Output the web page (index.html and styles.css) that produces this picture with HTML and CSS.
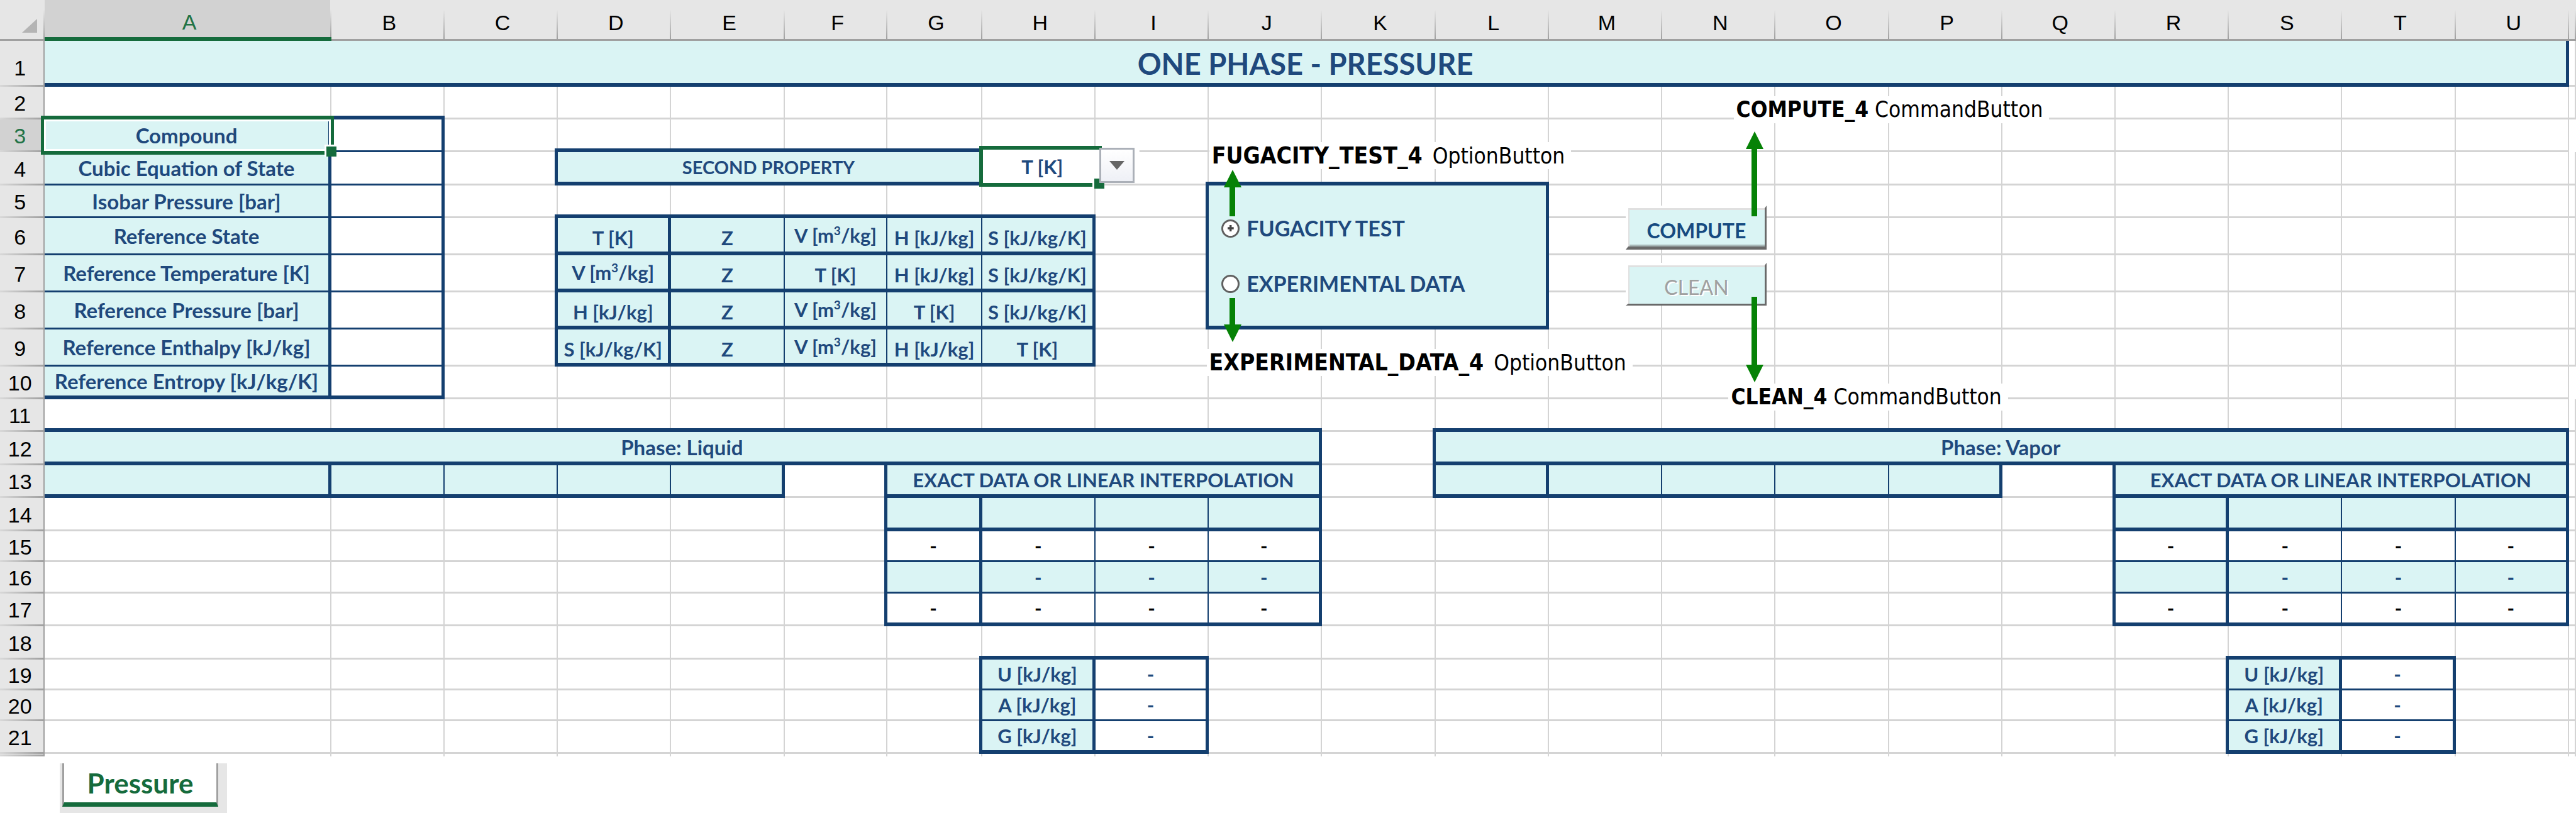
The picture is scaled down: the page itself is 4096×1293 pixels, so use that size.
FILE: index.html
```html
<!DOCTYPE html>
<html lang="en">
<head>
<meta charset="utf-8">
<title>One Phase - Pressure</title>
<link rel="stylesheet" href="styles.css">
</head>
<body>
<main class="sheet">
<table class="grid">
<colgroup><col class="w-head"><col class="w-a"><col span="4" class="w-std"><col class="w-f"><col class="w-g"><col span="14" class="w-std"><col></colgroup>
<thead>
<tr><th class="corner"><svg width="24" height="22" viewBox="0 0 24 22" aria-hidden="true"><path d="M24 0V22H0Z" fill="#b4b4b4"/></svg><th class="on">A<th>B<th>C<th>D<th>E<th>F<th>G<th>H<th>I<th>J<th>K<th>L<th>M<th>N<th>O<th>P<th>Q<th>R<th>S<th>T<th>U<th>
</thead>
<tbody>
<tr class="h-title"><th>1<td colspan="21" class="f k u title">ONE PHASE - PRESSURE<td>
<tr class="h52"><th>2<td class="u"><td class="u"><td><td><td><td><td><td><td><td><td><td><td><td><td><td><td><td><td><td><td><td>
<tr class="h52"><th class="on">3<td class="f k n name current">Compound<span class="cursor"></span><span class="handle"></span><td class="k n"><td class="c"><td class="u"><td class="u"><td class="u"><td class="u"><td class="u"><td><td><td><td><td><td><td><td><td><td><td><td><td>
<tr class="h53"><th>4<td class="f k n name">Cubic Equation of State<td class="k n"><td class="k"><td colspan="4" class="f k u second" id="second-property">SECOND PROPERTY<td class="picker"><select aria-labelledby="second-property"><option>T [K]<option>V [m³/kg]<option>H [kJ/kg]<option>S [kJ/kg/K]</select><span class="handle"></span><span class="drop"><svg width="24" height="14" viewBox="0 0 24 14" aria-hidden="true"><path d="M0 0H24L12 14Z" fill="#666"/></svg></span><td class="c"><td class="u"><td class="u"><td class="u"><td><td><td><td><td><td><td><td><td><td>
<tr class="h52"><th>5<td class="f k n name">Isobar Pressure [bar]<td class="k n"><td class="c"><td class="u"><td class="u"><td class="u"><td class="u"><td class="u"><td class="k"><td colspan="3" rowspan="4" class="f k u options"><div class="option-list"><label><input type="radio" name="source" checked>FUGACITY TEST</label><label><input type="radio" name="source">EXPERIMENTAL DATA</label></div><td><td><td><td><td><td><td><td><td><td>
<tr class="h59"><th>6<td class="f k n name">Reference State<td class="k n"><td class="k"><td class="f k u low">T [K]<td class="f t u low">Z<td class="f t u">V [m<sup>3</sup>/kg]<td class="f t u low">H [kJ/kg]<td class="f k u low">S [kJ/kg/K]<td class="k"><td><td><td><td><td><td><td><td><td><td>
<tr class="h59"><th>7<td class="f k n name">Reference Temperature [K]<td class="k n"><td class="k"><td class="f k u">V [m<sup>3</sup>/kg]<td class="f t u low">Z<td class="f t u low">T [K]<td class="f t u low">H [kJ/kg]<td class="f k u low">S [kJ/kg/K]<td class="k"><td><td><td><td><td><td><td><td><td><td>
<tr class="h59"><th>8<td class="f k n name">Reference Pressure [bar]<td class="k n"><td class="k"><td class="f k u low">H [kJ/kg]<td class="f t u low">Z<td class="f t u">V [m<sup>3</sup>/kg]<td class="f t u low">T [K]<td class="f k u low">S [kJ/kg/K]<td class="k"><td><td><td><td><td><td><td><td><td><td>
<tr class="h59"><th>9<td class="f k n name">Reference Enthalpy [kJ/kg]<td class="k n"><td class="k"><td class="f k u low">S [kJ/kg/K]<td class="f t u low">Z<td class="f t u">V [m<sup>3</sup>/kg]<td class="f t u low">H [kJ/kg]<td class="f k u low">T [K]<td><td><td><td><td><td><td><td><td><td><td><td><td><td>
<tr class="h52"><th>10<td class="f k u name">Reference Entropy [kJ/kg/K]<td class="k u"><td><td><td><td><td><td><td><td><td><td><td><td><td><td><td><td><td><td><td>
<tr class="h52"><th>11<td class="u"><td class="u"><td class="u"><td class="u"><td class="u"><td class="u"><td class="u"><td class="u"><td class="u"><td class="u"><td class="c"><td class="u"><td class="u"><td class="u"><td class="u"><td class="u"><td class="u"><td class="u"><td class="u"><td class="u"><td class="u"><td>
<tr class="h53"><th>12<td colspan="10" class="f k u name">Phase: Liquid<td class="k"><td colspan="10" class="f k u name">Phase: Vapor<td>
<tr class="h52"><th>13<td class="f k u"><td class="f t u"><td class="f t u"><td class="f t u"><td class="f k u"><td class="k"><td colspan="4" class="f k u">EXACT DATA OR LINEAR INTERPOLATION<td class="k"><td class="f k u"><td class="f t u"><td class="f t u"><td class="f t u"><td class="f k u"><td class="k"><td colspan="4" class="f k u">EXACT DATA OR LINEAR INTERPOLATION<td>
<tr class="h53"><th>14<td><td><td><td><td><td class="k"><td class="f k u"><td class="f t u"><td class="f t u"><td class="f k u"><td><td><td><td><td><td><td class="k"><td class="f k u"><td class="f t u"><td class="f t u"><td class="f k u"><td>
<tr class="h49"><th>15<td><td><td><td><td><td class="k"><td class="k n v">-<td class="t n v">-<td class="t n v">-<td class="k n v">-<td><td><td><td><td><td><td class="k"><td class="k n v">-<td class="t n v">-<td class="t n v">-<td class="k n v">-<td>
<tr class="h50"><th>16<td><td><td><td><td><td class="k"><td class="f k n"><td class="f t n">-<td class="f t n">-<td class="f k n">-<td><td><td><td><td><td><td class="k"><td class="f k n"><td class="f t n">-<td class="f t n">-<td class="f k n">-<td>
<tr class="h52"><th>17<td><td><td><td><td><td class="k"><td class="k u v">-<td class="t u v">-<td class="t u v">-<td class="k u v">-<td><td><td><td><td><td><td class="k"><td class="k u v">-<td class="t u v">-<td class="t u v">-<td class="k u v">-<td>
<tr class="h53"><th>18<td><td><td><td><td><td><td class="c"><td class="u"><td class="u"><td><td><td><td><td><td><td><td><td class="c"><td class="u"><td class="u"><td><td>
<tr class="h49"><th>19<td><td><td><td><td><td><td class="k"><td class="f k n">U [kJ/kg]<td class="k n">-<td><td><td><td><td><td><td><td><td class="k"><td class="f k n">U [kJ/kg]<td class="k n">-<td><td>
<tr class="h49"><th>20<td><td><td><td><td><td><td class="k"><td class="f k n">A [kJ/kg]<td class="k n">-<td><td><td><td><td><td><td><td><td class="k"><td class="f k n">A [kJ/kg]<td class="k n">-<td><td>
<tr class="h52"><th>21<td><td><td><td><td><td><td class="k"><td class="f k u">G [kJ/kg]<td class="k u">-<td><td><td><td><td><td><td><td><td class="k"><td class="f k u">G [kJ/kg]<td class="k u">-<td><td>
<tr class="cut"><th><td><td><td><td><td><td><td><td><td><td><td><td><td><td><td><td><td><td><td><td><td><td>
</tbody>
</table>

<button type="button" class="command compute">COMPUTE</button>
<button type="button" class="command clean" disabled>CLEAN</button>

<p class="note note-option note-fugacity"><b>FUGACITY_TEST_4</b> OptionButton</p>
<p class="note note-option note-experimental"><b>EXPERIMENTAL_DATA_4</b> OptionButton</p>
<p class="note note-compute"><b>COMPUTE_4</b> CommandButton</p>
<p class="note note-clean"><b>CLEAN_4</b> CommandButton</p>

<svg class="arrow arrow-fugacity" width="28" height="74" viewBox="0 0 28 74" aria-hidden="true"><path d="M14 0L28 28H18V74H9V28H0Z"/></svg>
<svg class="arrow arrow-experimental" width="28" height="70" viewBox="0 0 28 70" aria-hidden="true"><path d="M14 70L28 42H18V0H9V42H0Z"/></svg>
<svg class="arrow arrow-compute" width="28" height="135" viewBox="0 0 28 135" aria-hidden="true"><path d="M14 0L28 28H18V135H9V28H0Z"/></svg>
<svg class="arrow arrow-clean" width="28" height="136" viewBox="0 0 28 136" aria-hidden="true"><path d="M14 136L28 108H18V0H9V108H0Z"/></svg>
</main>
<nav class="tabs"><a href="#" class="tab">Pressure</a></nav>
</body>
</html>
```

FILE: styles.css
```css
:root {
  --navy: #143f6f;
  --ink: #1f497d;
  --fill: #daf4f4;
  --line: #d4d4d4;
  --head: #e6e6e6;
  --green: #156b3c;
}

* { box-sizing: border-box; }

body {
  margin: 0;
  background: #fff;
  color: var(--ink);
  font: bold 31px/34px Lato, "Open Sans", sans-serif;
}

.sheet { position: relative; }

/* Grid */
.grid {
  width: 100%;
  table-layout: fixed;
  border-collapse: separate;
  border-spacing: 0;
}

.w-head { width: 1.74%; }
.w-a { width: 11.12%; }
.w-std { width: 4.4%; }
.w-f { width: 4%; }
.w-g { width: 3.67%; }

.h-title { height: 73px; }
.h49 { height: 49px; }
.h50 { height: 50px; }
.h52 { height: 52px; }
.h53 { height: 53px; }
.h59 { height: 59px; }
.cut { height: 4px; }

td, th {
  padding: 0;
  text-align: center;
  vertical-align: middle;
  white-space: nowrap;
}

td {
  border-right: 2px solid var(--line);
  border-bottom: 3px solid var(--line);
}

.f { background: var(--fill); }
.k { border-right: 5px solid var(--navy); }
.t { border-right: 2px solid var(--navy); }
.u { border-bottom: 6px solid var(--navy); }
.n { border-bottom: 3px solid var(--navy); }
.v { color: #000; }
.low { padding-top: 8px; }
.name { font-size: 33px; }
.second { font-size: 29px; }
.title { font-size: 47px; line-height: 52px; padding-top: 4px; }
.cut td, .cut th { border-bottom: 0; }

/* Heavy rules run unbroken through the corners of their cells */
.k, .u, .c { position: relative; }

.k::before {
  content: "";
  position: absolute;
  top: 0;
  right: -5px;
  bottom: -3px;
  width: 5px;
  background: var(--navy);
}

.k.u::before { bottom: -6px; }

.u::after {
  content: "";
  position: absolute;
  left: 0;
  right: -2px;
  bottom: -6px;
  height: 6px;
  background: var(--navy);
}

.k.u::after { right: -5px; }

.c::after {
  content: "";
  position: absolute;
  right: -2px;
  bottom: -3px;
  width: 5px;
  height: 6px;
  background: var(--navy);
}

sup {
  font-size: 19px;
  line-height: 0;
  vertical-align: 12px;
}

th {
  background: var(--head);
  color: #000;
  font: 34px/38px "Liberation Sans", Arial, sans-serif;
}

thead th {
  height: 65px;
  padding: 10px 0 0 4px;
  border-bottom: 3px solid #a0a0a0;
  background: linear-gradient(#e6e6e6 25%, #a0a0a0) right / 2px 100% no-repeat var(--head);
}

thead .corner {
  padding: 20px 12px 0 0;
  text-align: right;
  line-height: 0;
}

tbody th {
  padding-right: 6px;
  border-right: 2px solid #a0a0a0;
  background: linear-gradient(90deg, #d8d8d8, #a0a0a0) bottom / 100% 3px no-repeat var(--head);
}

.h-title th { padding-top: 12px; }

th.on {
  background-color: #d2d2d2;
  color: #217346;
}

thead th.on { border-bottom: 6px solid var(--green); }

/* Active cell */
.current, .picker { position: relative; }

.cursor {
  position: absolute;
  inset: -6px -9px -7px -6px;
  z-index: 1;
  border: solid var(--green);
  border-width: 6px 5px;
  box-shadow: inset 0 0 0 3px #fff;
}

.handle {
  position: absolute;
  right: -13px;
  bottom: -10px;
  z-index: 1;
  width: 19px;
  height: 19px;
  background: var(--green);
  border: solid #fff;
  border-width: 3px 0 0 3px;
}

/* Drop-down cell */
.picker select {
  position: absolute;
  inset: -10px -10px -5px -5px;
  z-index: 1;
  width: 195px;
  padding: 0;
  appearance: none;
  background: #fff;
  border: solid var(--green);
  border-width: 6px 0 6px 6px;
  border-radius: 0;
  color: var(--ink);
  font: inherit;
  text-align: center;
  text-align-last: center;
}

.picker .handle { right: -16px; bottom: -8px; }

.drop {
  position: absolute;
  top: -7px;
  left: 186px;
  z-index: 1;
  display: grid;
  place-items: center;
  width: 56px;
  height: 56px;
  background: linear-gradient(#fff, #eef0f6);
  border: 3px solid #abb0b8;
  box-shadow: 4px 0 0 4px #fff;
  clip-path: inset(0 -8px 0 0);
  pointer-events: none;
}

/* Option buttons */
.options { vertical-align: top; }

.option-list {
  display: grid;
  gap: 48px;
  padding: 48px 0 0 20px;
}

.option-list label {
  display: flex;
  align-items: center;
  gap: 11px;
  height: 40px;
  font-size: 34px;
}

.option-list input {
  display: grid;
  place-items: center;
  width: 29px;
  height: 29px;
  margin: 0;
  appearance: none;
  background: #fff;
  border: 3px solid #606060;
  border-radius: 50%;
}

.option-list input:checked::before {
  content: "";
  width: 10px;
  height: 10px;
  background: #444;
  clip-path: polygon(33% 0, 67% 0, 67% 33%, 100% 33%, 100% 67%, 67% 67%, 67% 100%, 33% 100%, 33% 67%, 0 67%, 0 33%, 33% 33%);
}

/* Command buttons */
.command {
  position: absolute;
  left: 63.11%;
  width: 224px;
  padding: 0;
  background: var(--fill);
  border: solid;
  border-width: 4px 3px 5px 4px;
  border-color: #fff #696969 #696969 #fff;
  border-radius: 0;
  box-shadow: inset 2px 3px 0 #e0e0e0, inset 0 -3px 0 #a8b8b8;
  color: #164a80;
  font: bold 32px/36px Lato, "Open Sans", sans-serif;
}

.compute { top: 327px; height: 70px; padding-top: 10px; }

.clean {
  top: 418px;
  height: 68px;
  padding-top: 8px;
  border-bottom-width: 3px;
  box-shadow: inset 2px 3px 0 #e0e0e0;
  color: #a0a0a0;
  font-weight: normal;
  text-shadow: 2px 2px 0 #fff;
}

/* Callouts */
.note {
  position: absolute;
  height: 43px;
  margin: 0;
  padding: 0 10px 0 4px;
  background: #fff;
  color: #000;
  font: 35px/43px "DejaVu Sans Condensed", "DejaVu Sans", sans-serif;
  white-space: nowrap;
}

.note-option b { margin-right: 6px; font-size: 37px; }

.note-fugacity { left: 46.94%; top: 226px; }
.note-experimental { left: 46.84%; top: 555px; }
.note-compute { left: 67.3%; top: 153px; }
.note-clean { left: 67.1%; top: 610px; }

.arrow { position: absolute; fill: #068206; }
.arrow-fugacity { left: 47.5%; top: 270px; }
.arrow-experimental { left: 47.5%; top: 474px; }
.arrow-compute { left: 67.77%; top: 209px; }
.arrow-clean { left: 67.77%; top: 472px; }

/* Sheet tabs */
.tabs {
  display: flex;
  width: 266px;
  height: 79px;
  margin: 11px 0 0 95px;
  padding: 0 14px 10px 4px;
  background: var(--head);
}

.tab {
  flex: 1;
  padding-top: 7px;
  background: #fff;
  border: solid #a0a0a0;
  border-width: 0 3px;
  border-bottom: 7px solid var(--green);
  color: var(--green);
  font-size: 44px;
  line-height: 48px;
  text-align: center;
  text-decoration: none;
}
```
